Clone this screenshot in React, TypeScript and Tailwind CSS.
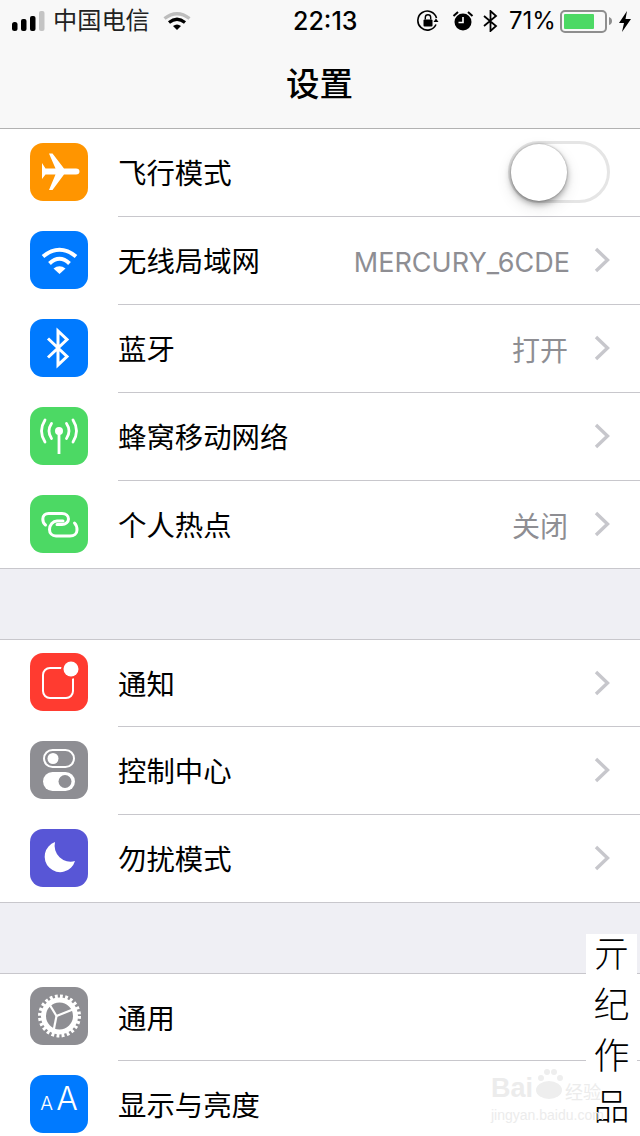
import type { ReactNode } from "react";

const cjk = "font-['Inter','Noto_Sans_CJK_SC',sans-serif]";

function Chevron() {
  return (
    <svg width="16" height="26" viewBox="0 0 16 26" fill="none" stroke="#c7c7cc" strokeWidth="3.4">
      <polyline points="2,2 13.5,13 2,24" />
    </svg>
  );
}

function Toggle() {
  return (
    <div className="w-[102px] h-[62px] rounded-full border-[3px] border-[#e5e5e5] bg-white flex items-center">
      <div className="w-[56px] h-[57px] rounded-full bg-white shadow-[0_3px_6px_rgba(0,0,0,0.35),0_0_2px_rgba(0,0,0,0.35),0_6px_16px_rgba(0,0,0,0.12)]" />
    </div>
  );
}

function Glyph({ children }: { children: ReactNode }) {
  return (
    <svg width="58" height="58" viewBox="0 0 58 58" fill="none">
      {children}
    </svg>
  );
}

const AirplaneIcon = (
  <Glyph>
    <path fill="#fff" d="M12 20 L15.5 25.5 H25.5 L19 10.5 H22.5 L34 25.5 H46 Q49.5 25.5 49.5 28.5 Q49.5 31.5 46 31.5 H34 L22.5 47 H19 L25.5 31.5 H15.5 L12 36 Z" />
  </Glyph>
);

const WifiIcon = (
  <Glyph>
    <g stroke="#fff" strokeWidth="4">
      <path d="M13 25.5 Q29.5 12 46 25.5" />
      <path d="M19.5 32.5 Q29.5 23 39.5 32.5" />
    </g>
    <path fill="#fff" d="M23.5 37.5 Q29.5 33 35.5 37.5 L29.5 43 Z" />
  </Glyph>
);

const BluetoothIcon = (
  <Glyph>
    <path stroke="#fff" strokeWidth="3" d="M18 19.5 L37 37.5 L28 46 V12 L37 20.5 L18 38.5" />
  </Glyph>
);

const CellularIcon = (
  <Glyph>
    <g stroke="#fff" strokeWidth="2.8" strokeLinecap="round">
      <path d="M15 13 Q8 24 15 35" />
      <path d="M43 13 Q50 24 43 35" />
      <path d="M21.5 16.5 Q16.5 24 21.5 31.5" />
      <path d="M36.5 16.5 Q41.5 24 36.5 31.5" />
      <path d="M29 26 V47" strokeLinecap="butt" />
    </g>
    <circle cx="29" cy="24" r="4" fill="#fff" />
  </Glyph>
);

const HotspotIcon = (
  <Glyph>
    <g stroke="#fff" strokeWidth="3" strokeLinecap="round">
      <path d="M15.5 30 C13.5 28.5 12.8 26 12.8 24 C12.8 20.5 15.5 18.5 18.5 18.5 H32 C36 18.5 38.5 21 38.5 24 C38.5 27 35.5 29.5 32 29.5 H27" />
      <path d="M44.5 28 C46.5 30 47 33 47 35 C47 38.5 44 41 40 41 H26 C22 41 19.5 38 19.5 34.5 C19.5 30 23 26 27 26 H33" />
    </g>
  </Glyph>
);

const NotifyIcon = (
  <Glyph>
    <rect x="13" y="15" width="30" height="30" rx="7" stroke="#fff" strokeWidth="2" />
    <circle cx="41" cy="16" r="10" fill="#ff3b30" />
    <circle cx="41" cy="16" r="7.5" fill="#fff" />
  </Glyph>
);

const ControlIcon = (
  <Glyph>
    <rect x="14" y="9" width="30" height="17" rx="8.5" stroke="#fff" strokeWidth="2" />
    <circle cx="23" cy="17.5" r="5.5" fill="#fff" />
    <rect x="13" y="31" width="32" height="19" rx="9.5" fill="#fff" />
    <circle cx="35" cy="40.5" r="6.5" fill="#8e8e93" />
  </Glyph>
);

const MoonIcon = (
  <Glyph>
    <path fill="#fff" d="M25 13 A15.5 15.5 0 1 0 45 32 A16 16 0 0 1 25 13 Z" />
  </Glyph>
);

const GearIcon = (
  <Glyph>
    <circle cx="29.5" cy="29" r="19.5" stroke="#fff" strokeWidth="4" strokeDasharray="2.8 2.3" />
    <circle cx="29.5" cy="29" r="16" stroke="#fff" strokeWidth="5" />
    <g stroke="#fff" strokeWidth="2.2">
      <path d="M26.5 29 L18 15" />
      <path d="M26.5 29 L44 22" />
      <path d="M26.5 29 L23.5 44" />
    </g>
  </Glyph>
);

const TextSizeIcon = (
  <div className="flex items-end justify-center gap-[3px] w-full pb-[11px] text-white font-['Inter',sans-serif] font-light leading-none">
    <span className="text-[19px] leading-[15px]">A</span>
    <span className="text-[32px] leading-[24px]">A</span>
  </div>
);

function Row({
  color, icon, label, value, toggle, first, last,
}: {
  color: string; icon: ReactNode; label: string; value?: string; toggle?: boolean; first?: boolean; last?: boolean;
}) {
  return (
    <div className={`h-[88px] bg-white flex ${last ? "border-b border-[#c8c7cc]" : ""} ${first ? "border-t border-[#c8c7cc]" : ""}`}>
      <div className={`w-[118px] shrink-0 pl-[30px] ${first ? "pt-[13px]" : "pt-[14px]"}`}>
        <div className={`w-[58px] h-[58px] rounded-[13px] flex items-center justify-center ${color}`}>{icon}</div>
      </div>
      <div className={`flex-1 flex items-center justify-between pr-[30px] pb-[1px] ${last ? "" : "border-b border-[#c8c7cc]"}`}>
        <span className="text-[28.4px] pt-[5px] text-black leading-none">{label}</span>
        <div className="flex items-center gap-[24px]">
          {value && (
            <span className={`pt-[5px] text-[#8e8e93] leading-none ${value.length > 2 ? "text-[27px]" : "text-[28px] mr-[2px]"}`}>{value}</span>
          )}
          {toggle ? <Toggle /> : <Chevron />}
        </div>
      </div>
    </div>
  );
}

function StatusBar() {
  return (
    <div className="h-[42px] flex items-center pl-[12px] text-black">
      <div className="w-[281px] flex items-center">
        <svg width="33" height="20" viewBox="0 0 33 20" fill="#000">
          <rect x="0" y="11" width="5.5" height="9" rx="2.5" />
          <rect x="9" y="8" width="5.5" height="12" rx="2" />
          <rect x="18" y="5" width="5.5" height="15" rx="2" />
          <rect x="27" y="0" width="5.5" height="20" rx="2" fill="#c4c4c4" />
        </svg>
        <span className="ml-[8px] text-[24.2px] leading-none text-[#222]">中国电信</span>
        <svg className="ml-[13px]" width="28" height="20" viewBox="0 0 28 20" fill="none">
          <path d="M1.5 7.5 Q14 -2 26.5 7.5" stroke="#bdbdbd" strokeWidth="3.4" />
          <path d="M6 11.5 Q14 5 22 11.5" stroke="#000" strokeWidth="3.2" />
          <path d="M10 15 Q14 12 18 15 L14 19 Z" fill="#000" />
        </svg>
      </div>
      <span className="w-[64px] text-[25px] font-medium leading-none whitespace-nowrap">22:13</span>
      <div className="ml-[60px] flex items-center">
        <svg width="22" height="22" viewBox="0 0 22 22" fill="none">
          <path d="M19 14.5 A9.5 9.5 0 1 1 19.5 8" stroke="#000" strokeWidth="1.6" />
          <path d="M16.5 9 L21.5 9 L19 12.5 Z" fill="#000" transform="rotate(180 19 10.5)" />
          <rect x="6.5" y="9.5" width="9" height="7" rx="1" fill="#000" />
          <path d="M8.3 9.5 V7.5 A2.7 2.7 0 0 1 13.7 7.5 V9.5" stroke="#000" strokeWidth="1.4" />
        </svg>
        <svg className="ml-[13px]" width="22" height="22" viewBox="0 0 22 22" fill="none">
          <circle cx="11" cy="12" r="8.5" fill="#000" />
          <path d="M11 7 V12.5 H6.5" stroke="#fff" strokeWidth="1.6" />
          <path d="M1.5 6 L6 2 M16 2 L20.5 6" stroke="#000" strokeWidth="2" />
        </svg>
        <svg className="ml-[9px]" width="15" height="22" viewBox="0 0 15 22" fill="none">
          <path d="M1 6 L13 16 L7.5 21 V1 L13 6 L1 16" stroke="#000" strokeWidth="1.8" />
        </svg>
        <span className="ml-[11px] text-[24px] leading-none whitespace-nowrap">71%</span>
        <div className="ml-[4px] w-[47px] h-[23px] rounded-[5px] border-[2px] border-[#8e8e8e] p-[2px] flex">
          <div className="w-[30px] h-full bg-[#4cd964] rounded-[1px]" />
        </div>
        <svg className="ml-[2px]" width="3" height="8" viewBox="0 0 3 8"><path d="M0 0 Q3 1 3 4 Q3 7 0 8 Z" fill="#8e8e8e" /></svg>
        <svg className="ml-[7px]" width="12" height="21" viewBox="0 0 12 21"><path d="M8 0 L0 12 H5 L3 21 L12 8 H6.5 Z" fill="#000" /></svg>
      </div>
    </div>
  );
}

export default function App() {
  return (
    <div className={`relative w-[640px] h-[1136px] overflow-hidden bg-[#efeff4] ${cjk}`}>
      <header className="h-[129px] bg-[#f8f8f8] border-b border-[#b2b2b2]">
        <StatusBar />
        <h1 className="mt-[26px] pr-[1px] text-center text-[33.5px] font-medium leading-none text-black">设置</h1>
      </header>

      <Row color="bg-[#ff9500]" icon={AirplaneIcon} label="飞行模式" toggle />
      <Row color="bg-[#007aff]" icon={WifiIcon} label="无线局域网" value="MERCURY_6CDE" />
      <Row color="bg-[#007aff]" icon={BluetoothIcon} label="蓝牙" value="打开" />
      <Row color="bg-[#4cd964]" icon={CellularIcon} label="蜂窝移动网络" />
      <Row color="bg-[#4cd964]" icon={HotspotIcon} label="个人热点" value="关闭" last />

      <div className="h-[70px]" />

      <Row color="bg-[#ff3b30]" icon={NotifyIcon} label="通知" first />
      <Row color="bg-[#8e8e93]" icon={ControlIcon} label="控制中心" />
      <Row color="bg-[#5856d6]" icon={MoonIcon} label="勿扰模式" last />

      <div className="h-[70px]" />

      <Row color="bg-[#8e8e93]" icon={GearIcon} label="通用" first />
      <Row color="bg-[#007aff]" icon={TextSizeIcon} label="显示与亮度" />

      {/* handwritten signature */}
      <div className="absolute left-[586px] top-[934px] w-[51px] h-[200px] bg-white flex flex-col items-center text-[36px] font-light leading-[51px] text-black">
        <span className="-mt-[5px]">亓</span>
        <span>纪</span>
        <span>作</span>
        <span>品</span>
      </div>

      {/* baidu watermark */}
      <div className="absolute left-[491px] top-[1066px] w-[120px] text-[#ececec] font-['Liberation_Sans',sans-serif]">
        <div className="flex items-end h-[36px]">
          <span className="text-[27px] font-bold leading-none">Bai</span>
          <svg className="mx-[1px]" width="30" height="36" viewBox="0 0 30 36" fill="#eeeeee">
            <circle cx="7" cy="12" r="3" /><circle cx="13" cy="6" r="3" /><circle cx="20" cy="6" r="3" /><circle cx="26" cy="12" r="3" />
            <ellipse cx="15" cy="24" rx="13" ry="9" />
          </svg>
          <span className={`text-[18px] leading-none ${cjk}`}>经验</span>
        </div>
        <div className="mt-[6px] text-[14px] leading-none whitespace-nowrap">jingyan.baidu.com</div>
      </div>
    </div>
  );
}
